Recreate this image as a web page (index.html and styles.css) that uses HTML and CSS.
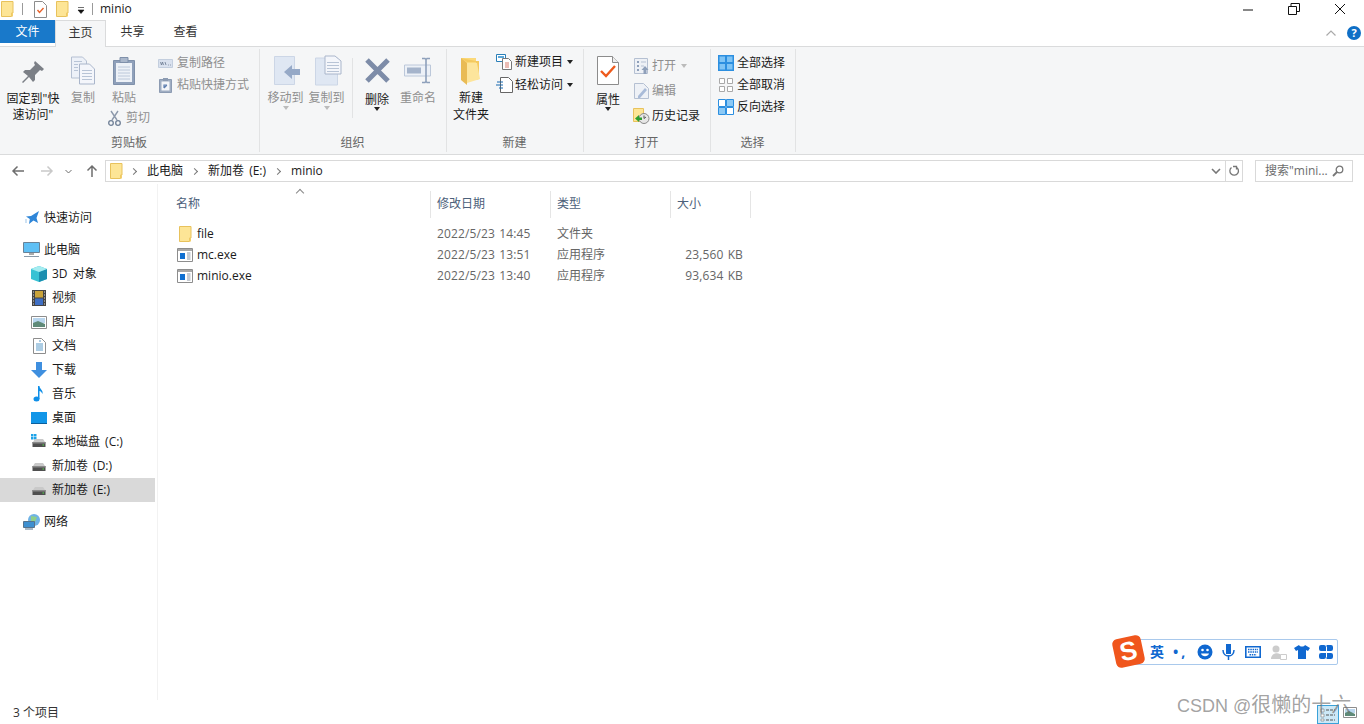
FILE: index.html
```html
<!DOCTYPE html>
<html lang="zh">
<head>
    <meta charset="UTF-8">
    <title>minio</title>
    <link rel="stylesheet" href="styles.css">
</head>
<body>
    <svg class="defs" aria-hidden="true">
        <symbol id="folder" viewBox="0 0 13 16">
            <path d="M.5.500h11.500v11.500h-1.500v3.500H.5z" fill="#fde596" stroke="#e8c25c"/>
            <path d="M10.500 12h1.500v3.500h-1.500z" fill="#f3cf6d"/>
        </symbol>
        <symbol id="exe" viewBox="0 0 16 14">
            <path d="M.5.500h15v13H.5z" fill="#fff" stroke="#8d8d8d"/>
            <path d="M1 1h14v2H1z" fill="#a8a8a8"/>
            <path d="M3 5h5v6H3z" fill="#0f6fd1"/>
            <path d="M10 5h3.500M10 7h3.500M10 9h3.500M10 11h3.500" stroke="#8d99a8"/>
        </symbol>
        <symbol id="drive" viewBox="0 0 16 16">
            <path d="M2 8l2-3h8l2 3z" fill="#c9c9c9"/>
            <path d="M1.500 8h13v5h-13z" fill="#4f4f4f"/>
            <path d="M1.500 8h13v1.500h-13z" fill="#8a8a8a"/>
            <path d="M11.500 10.500h1.500v1h-1.500z" fill="#53e04a"/>
        </symbol>
    </svg>

    <div class="titlebar">
        <svg class="qa-icon" width="13" height="16"><use href="#folder"/></svg>
        <span class="qa-sep"></span>
        <svg class="qa-doc" width="13" height="17" viewBox="0 0 13 17">
            <path d="M.5.500h8l4 4v12H.5z" fill="#fff" stroke="#8c8c8c"/>
            <path d="M3.500 9l2 2.500 4-4.500" fill="none" stroke="#e8622a" stroke-width="1.400"/>
        </svg>
        <svg class="qa-folder" width="13" height="16"><use href="#folder"/></svg>
        <svg class="qa-arrow" width="8" height="7" viewBox="0 0 8 7">
            <path d="M1 .5h6M1 3h6L4 6.500z" fill="#111" stroke="#111" stroke-width=".6"/>
        </svg>
        <span class="qa-sep"></span>
        <span class="title-text">minio</span>
        <div class="win-btns">
            <svg width="12" height="12" viewBox="0 0 12 12"><path d="M1 7h10" stroke="#111"/></svg>
            <svg width="12" height="12" viewBox="0 0 12 12"><path d="M.5 3.500h8v8h-8zM3 3.500V.5h8.500v8H8.500" fill="none" stroke="#111"/></svg>
            <svg width="12" height="12" viewBox="0 0 12 12"><path d="M1 1l10 10M11 1L1 11" stroke="#111"/></svg>
        </div>
    </div>

    <div class="tabs">
        <div class="tab tab-file">文件</div>
        <div class="tab tab-active">主页</div>
        <div class="tab">共享</div>
        <div class="tab">查看</div>
        <div class="tabs-right">
            <svg width="12" height="8" viewBox="0 0 12 8"><path d="M1.500 6.500L6 2l4.500 4.500" fill="none" stroke="#aaa" stroke-width="1.200"/></svg>
            <span class="help">?</span>
        </div>
    </div>

    <div class="ribbon">
        <div class="group group-clip">
            <div class="group-body">
                <div class="big big-pin">
                    <svg class="big-icon" width="24" height="24" viewBox="0 0 24 24">
                        <path d="M14 1l9 8-2 2-2-1-5 5 0 5-2 2-4-5-6 6-1-1 6-6-5-4 2-2 5 0 5-5-1-2z" fill="#7b7f86"/>
                    </svg>
                    <span>固定到"快<br>速访问"</span>
                </div>
                <div class="big big-copy off">
                    <svg class="big-icon" width="24" height="28" viewBox="0 0 24 28">
                        <path d="M.5.500h11l4 4v17H.5z" fill="#edf1f8" stroke="#b5c0d2"/>
                        <path d="M8.500 7.500h10l5 5v15h-15z" fill="#f4f6fb" stroke="#aab6cb"/>
                        <path d="M3 5h8M3 8h4M3 11h4M3 14h4M11 14h10M11 17h10M11 20h10M11 23h10" stroke="#b8c4d6"/>
                    </svg>
                    <span>复制</span>
                </div>
                <div class="clip-mid">
                    <div class="big big-paste off">
                        <svg class="big-icon" width="22" height="29" viewBox="0 0 22 29">
                            <path d="M.5 4.500h21v24H.5z" fill="#8fa0ba" stroke="#7f90aa"/>
                            <path d="M3 7h16v19H3z" fill="#edf1f7"/>
                            <path d="M7 1.500h8v5H7z" fill="#aab7cb" stroke="#7f90aa"/>
                            <path d="M5 11h12M5 14h12M5 17h12M5 20h12M5 23h12" stroke="#bcc8da"/>
                        </svg>
                        <span>粘贴</span>
                    </div>
                    <div class="small off">
                        <svg width="13" height="16" viewBox="0 0 13 16">
                            <path d="M3 1l6 9M10 1L4 10" stroke="#8d99ab" stroke-width="1.400"/>
                            <circle cx="3" cy="13" r="2.300" fill="none" stroke="#6f7f96" stroke-width="1.300"/>
                            <circle cx="10" cy="13" r="2.300" fill="none" stroke="#6f7f96" stroke-width="1.300"/>
                        </svg>
                        <span>剪切</span>
                    </div>
                </div>
                <div class="small-col off">
                    <div class="small">
                        <svg width="15" height="9" viewBox="0 0 15 9">
                            <path d="M.5.500h14v8H.5z" fill="#d9e1ee" stroke="#c3cede"/>
                            <path d="M2.500 3l1 3 1-3 1 3M7 3l1 3M10 6h.8M12 6h.8" stroke="#68778e" fill="none" stroke-width=".8"/>
                        </svg>
                        <span>复制路径</span>
                    </div>
                    <div class="small small-short">
                        <svg width="13" height="16" viewBox="0 0 13 16">
                            <path d="M.5 2.500h12v13H.5z" fill="#9fadc2" stroke="#8c9bb2"/>
                            <path d="M2.500 4.500h8v9h-8z" fill="#f3f5f9"/>
                            <path d="M4 1h5v3H4z" fill="#8c9bb2"/>
                            <path d="M5 11V8h3M8 8l-3 3" fill="none" stroke="#5f7fb0" stroke-width="1.200"/>
                        </svg>
                        <span>粘贴快捷方式</span>
                    </div>
                </div>
            </div>
            <div class="group-label">剪贴板</div>
        </div>

        <div class="group group-org">
            <div class="group-body">
                <div class="big big-move off">
                    <svg class="big-icon" width="27" height="29" viewBox="0 0 27 29">
                        <path d="M.5.500h20v28H.5z" fill="#dfe7f3" stroke="#ccd6e6"/>
                        <path d="M10 16l8-7v4h8v6h-8v4z" fill="#96a9c7"/>
                    </svg>
                    <span>移动到</span>
                    <i class="caret caret-off"></i>
                </div>
                <div class="big big-moveto off">
                    <svg class="big-icon" width="27" height="30" viewBox="0 0 27 30">
                        <path d="M.5 2.500h22v27H.5z" fill="#dfe7f3" stroke="#ccd6e6"/>
                        <path d="M10 .5h10l6 5v13H10z" fill="#f4f6fb" stroke="#aab6cb"/>
                        <path d="M12 7h12M12 10h12M12 13h12M12 16h12" stroke="#b8c4d6"/>
                    </svg>
                    <span>复制到</span>
                    <i class="caret caret-off"></i>
                </div>
                <span class="org-sep"></span>
                <div class="big big-del">
                    <svg class="big-icon" width="27" height="27" viewBox="0 0 27 27">
                        <path d="M3 3l21 21M24 3L3 24" stroke="#7d8ca8" stroke-width="5"/>
                    </svg>
                    <span class="big-low">删除</span>
                    <i class="caret"></i>
                </div>
                <div class="big big-ren off">
                    <svg class="big-icon" width="28" height="26" viewBox="0 0 28 26">
                        <path d="M.5 7.500h26v11H.5z" fill="#edf1f7" stroke="#bcc8da"/>
                        <path d="M3 10h14v6H3z" fill="#a5b4cb"/>
                        <path d="M18 1h3l1 1 1-1h3M22 2v22M18 25h3l1-1 1 1h3" fill="none" stroke="#8ea0bb" stroke-width="1.600"/>
                    </svg>
                    <span>重命名</span>
                </div>
            </div>
            <div class="group-label">组织</div>
        </div>

        <div class="group group-new">
            <div class="group-body">
                <div class="big big-folder">
                    <svg class="big-icon" width="20" height="27" viewBox="0 0 20 27">
                        <path d="M0 0h15v20H0z" fill="#fbd97a"/>
                        <path d="M0 0l6 4h9v18l3-1V3H15z" fill="#f4c95f"/>
                        <path d="M0 0l6 5v22l-6-5z" fill="#e9bb55"/>
                        <path d="M6 5h10l3 16-13 4z" fill="#fde59c"/>
                    </svg>
                    <span>新建<br>文件夹</span>
                </div>
                <div class="small-col new-col">
                    <div class="small">
                        <svg width="17" height="16" viewBox="0 0 17 16">
                            <path d="M.5.500h9v7h-9z" fill="#fff" stroke="#2a7fb8"/>
                            <path d="M2 2h6v2H2z" fill="#5aa6d8"/>
                            <path d="M6.500 4.500h6l3 3v8h-9z" fill="#fff" stroke="#777"/>
                            <path d="M9 9h4M9 11h4M9 13h4" stroke="#d97a6b"/>
                        </svg>
                        <span>新建项目</span>
                        <i class="caret caret-side"></i>
                    </div>
                    <div class="small">
                        <svg width="17" height="16" viewBox="0 0 17 16">
                            <path d="M4.500.5h8l4 4v11h-12z" fill="#fff" stroke="#666"/>
                            <path d="M1 5h6M0 8h7M3 11h4" stroke="#1668b0"/>
                        </svg>
                        <span>轻松访问</span>
                        <i class="caret caret-side"></i>
                    </div>
                </div>
            </div>
            <div class="group-label">新建</div>
        </div>

        <div class="group group-open">
            <div class="group-body">
                <div class="big big-prop">
                    <svg class="big-icon" width="22" height="29" viewBox="0 0 22 29">
                        <path d="M.5.500h15l6 6v22H.5z" fill="#fff" stroke="#8c8c8c"/>
                        <path d="M15.500.5v6h6" fill="#eee" stroke="#8c8c8c"/>
                        <path d="M4 15l5 5 9-10" fill="none" stroke="#ee5a1c" stroke-width="2.400"/>
                    </svg>
                    <span class="big-low">属性</span>
                    <i class="caret"></i>
                </div>
                <div class="small-col open-col">
                    <div class="small off">
                        <svg width="15" height="16" viewBox="0 0 15 16">
                            <path d="M.5.500h13v15H.5z" fill="#eef1f6" stroke="#b5c0d2"/>
                            <path d="M3 3h2v2H3zM3 7h2v2H3zM3 11h2v2H3z" fill="#8fa0ba"/>
                            <path d="M7 4h5M7 8h3" stroke="#b5c0d2"/>
                            <path d="M11 8l3.500 4H12.500v4h-3v-4H7.500z" fill="#8fa0ba"/>
                        </svg>
                        <span>打开</span>
                        <i class="caret caret-side caret-off"></i>
                    </div>
                    <div class="small off">
                        <svg width="15" height="16" viewBox="0 0 15 16">
                            <path d="M.5.500h9l5 5v10H.5z" fill="#eef1f6" stroke="#b5c0d2"/>
                            <path d="M4 13l7-8 2 2-7 8H4z" fill="#a9bbd8"/>
                        </svg>
                        <span>编辑</span>
                    </div>
                    <div class="small">
                        <svg width="17" height="16" viewBox="0 0 17 16">
                            <path d="M.5.500h10v13H.5z" fill="#fde596" stroke="#e8c25c"/>
                            <circle cx="11" cy="10.500" r="5" fill="#e6e6e6" stroke="#888"/>
                            <path d="M11 7.500v3l2-1.500" fill="none" stroke="#555"/>
                            <path d="M2 10.500l4-3.500v2.500h3v2.500H6v2z" fill="#2f9e2f"/>
                        </svg>
                        <span>历史记录</span>
                    </div>
                </div>
            </div>
            <div class="group-label">打开</div>
        </div>

        <div class="group group-sel">
            <div class="group-body">
                <div class="small-col sel-col">
                    <div class="small">
                        <svg width="16" height="16" viewBox="0 0 16 16">
                            <path d="M0 0h16v16H0z" fill="#2c8fe0"/>
                            <path d="M1.500 1.500h5.500v5.500H1.500zM9 1.500h5.500v5.500H9zM1.500 9h5.500v5.500H1.500zM9 9h5.500v5.500H9z" fill="#7fc4f5"/>
                        </svg>
                        <span>全部选择</span>
                    </div>
                    <div class="small">
                        <svg width="16" height="16" viewBox="0 0 16 16">
                            <path d="M1.500 1.500h5v5h-5zM9.500 1.500h5v5h-5zM1.500 9.500h5v5h-5zM9.500 9.500h5v5h-5z" fill="#fff" stroke="#a9a9a9"/>
                        </svg>
                        <span>全部取消</span>
                    </div>
                    <div class="small">
                        <svg width="16" height="16" viewBox="0 0 16 16">
                            <path d="M.5 8.500h7v7h-7zM8.500.5h7v7h-7z" fill="#8cc9f5" stroke="#2c8fe0"/>
                            <path d="M.5.500h7v7h-7zM8.500 8.500h7v7h-7z" fill="#fff" stroke="#2c8fe0"/>
                        </svg>
                        <span>反向选择</span>
                    </div>
                </div>
            </div>
            <div class="group-label">选择</div>
        </div>
    </div>

    <div class="addressbar">
        <div class="nav-btns">
            <svg width="14" height="12" viewBox="0 0 14 12"><path d="M13 6H2M6.500 1.500L2 6l4.500 4.500" fill="none" stroke="#6e6e6e" stroke-width="1.500"/></svg>
            <svg width="14" height="12" viewBox="0 0 14 12"><path d="M1 6h11M7.500 1.500L12 6l-4.500 4.500" fill="none" stroke="#c9c9c9" stroke-width="1.500"/></svg>
            <svg width="7" height="5" viewBox="0 0 7 5"><path d="M.5 1l3 3 3-3" fill="none" stroke="#6e6e6e"/></svg>
            <svg width="12" height="14" viewBox="0 0 12 14"><path d="M6 13V2M1.500 6.500L6 2l4.500 4.500" fill="none" stroke="#6e6e6e" stroke-width="1.500"/></svg>
        </div>
        <div class="path-box">
            <svg class="path-folder" width="13" height="16"><use href="#folder"/></svg>
            <i class="crumb-sep"></i><span>此电脑</span>
            <i class="crumb-sep"></i><span>新加卷 (E:)</span>
            <i class="crumb-sep"></i><span>minio</span>
            <div class="path-end">
                <svg width="10" height="6" viewBox="0 0 10 6"><path d="M1 1l4 4 4-4" fill="none" stroke="#777" stroke-width="1.600"/></svg>
                <span class="path-refresh">
                    <svg width="11" height="12" viewBox="0 0 11 12"><path d="M4 1.500h3.500v3M7 2a4.300 4.300 0 1 1-4.500.5" fill="none" stroke="#777" stroke-width="1.300"/></svg>
                </span>
            </div>
        </div>
        <div class="search-box">
            <span>搜索"mini...</span>
            <svg width="12" height="12" viewBox="0 0 12 12"><circle cx="7.500" cy="4.500" r="3.300" fill="none" stroke="#777" stroke-width="1.300"/><path d="M5 7l-4 4" stroke="#777" stroke-width="1.800"/></svg>
        </div>
    </div>

    <div class="main">
        <div class="nav">
            <div class="nav-item top nav-quick">
                <svg width="14" height="14" viewBox="0 0 14 14"><path d="M14 0l-2.500 7 1.500 5-4.500-2.500L4 13l.8-5L1 5.500l5-.5z" fill="#2f86d8"/><path d="M0 9h2M0 11h2" stroke="#9cc4e8"/></svg>
                <span>快速访问</span>
            </div>
            <div class="nav-block">
                <div class="nav-item top">
                    <svg width="18" height="16" viewBox="0 0 18 16"><path d="M.5.500h16v10H.5z" fill="#5fc0f5" stroke="#6a8296"/><path d="M6 11h5v2H6z" fill="#aaa"/><path d="M1 14h15v1H1z" fill="#8a9aa8"/></svg>
                    <span>此电脑</span>
                </div>
                <div class="nav-item">
                    <svg width="16" height="16" viewBox="0 0 16 16"><path d="M8 0l8 3v10l-8 3-8-3V3z" fill="#37c2d4"/><path d="M8 6l8-3v10l-8 3z" fill="#1b8fb0"/><path d="M8 0l8 3-8 3-8-3z" fill="#a5ecf0"/></svg>
                    <span>3D 对象</span>
                </div>
                <div class="nav-item">
                    <svg width="16" height="16" viewBox="0 0 16 16"><path d="M1 0h14v16H1z" fill="#444"/><path d="M4 1h8v6.500H4z" fill="#c9a33a"/><path d="M4 8.500h8V15H4z" fill="#3f6fc4"/><path d="M2 2h1M2 5h1M2 8h1M2 11h1M2 14h1M13 2h1M13 5h1M13 8h1M13 11h1M13 14h1" stroke="#ddd"/></svg>
                    <span>视频</span>
                </div>
                <div class="nav-item">
                    <svg width="16" height="13" viewBox="0 0 16 13"><path d="M.5.500h15v12H.5z" fill="#fff" stroke="#8d8d8d"/><path d="M2 2h12v5H2z" fill="#b9d6ee"/><path d="M2 7l5-2 7 3v3H2z" fill="#5f8a78"/></svg>
                    <span>图片</span>
                </div>
                <div class="nav-item">
                    <svg class="nav-doc" width="13" height="16" viewBox="0 0 13 16"><path d="M.5.500h8l4 4v11H.5z" fill="#fff" stroke="#8d8d8d"/><path d="M3 6h7M3 8h7M3 10h7M3 12h7M6 3h2" stroke="#5a9bc9"/></svg>
                    <span>文档</span>
                </div>
                <div class="nav-item">
                    <svg width="16" height="16" viewBox="0 0 16 16"><path d="M5 0h6v8h5l-8 8-8-8h5z" fill="#3f8fdf"/></svg>
                    <span>下载</span>
                </div>
                <div class="nav-item">
                    <svg width="16" height="16" viewBox="0 0 16 16"><ellipse cx="5.500" cy="13" rx="3" ry="2.500" fill="#0f8fe8"/><path d="M7 13V0h1.500c0 3 4 4 3 8-1-2-2-3-3-3v8z" fill="#0f8fe8"/></svg>
                    <span>音乐</span>
                </div>
                <div class="nav-item">
                    <svg width="16" height="12" viewBox="0 0 16 12"><path d="M0 0h16v11H0z" fill="#1296e8"/><path d="M0 11h16v1H0z" fill="#0c5f9c"/></svg>
                    <span>桌面</span>
                </div>
                <div class="nav-item">
                    <svg width="16" height="16" viewBox="0 0 16 16"><path d="M0 0h2.500v2.500H0zM3 0h2.500v2.500H3zM0 3h2.500v2.500H0zM3 3h2.500v2.500H3z" fill="#1fa3e8"/><use href="#drive"/></svg>
                    <span>本地磁盘 (C:)</span>
                </div>
                <div class="nav-item">
                    <svg width="16" height="16"><use href="#drive"/></svg>
                    <span>新加卷 (D:)</span>
                </div>
                <div class="nav-item nav-selected">
                    <svg width="16" height="16"><use href="#drive"/></svg>
                    <span>新加卷 (E:)</span>
                </div>
            </div>
            <div class="nav-block">
                <div class="nav-item top">
                    <svg width="18" height="16" viewBox="0 0 18 16"><circle cx="11" cy="6" r="6" fill="#6fb3e6"/><path d="M8 2l6 1-2 5-4-1z" fill="#8fcf8a"/><path d="M.5 7.500h11v6H.5z" fill="#3d8fd0" stroke="#55728c"/><path d="M2 15h8" stroke="#55728c"/></svg>
                    <span>网络</span>
                </div>
            </div>
        </div>

        <div class="files">
            <span class="sort-arrow"></span>
            <div class="head">
                <div class="col-name">名称</div>
                <div class="col-date">修改日期</div>
                <div class="col-type">类型</div>
                <div class="col-size">大小</div>
            </div>
            <div class="row">
                <div class="col-name"><svg class="row-folder" width="13" height="16"><use href="#folder"/></svg>file</div>
                <div class="col-date">2022/5/23 14:45</div>
                <div class="col-type">文件夹</div>
                <div class="col-size"></div>
            </div>
            <div class="row">
                <div class="col-name"><svg width="16" height="14"><use href="#exe"/></svg>mc.exe</div>
                <div class="col-date">2022/5/23 13:51</div>
                <div class="col-type">应用程序</div>
                <div class="col-size">23,560 KB</div>
            </div>
            <div class="row">
                <div class="col-name"><svg width="16" height="14"><use href="#exe"/></svg>minio.exe</div>
                <div class="col-date">2022/5/23 13:40</div>
                <div class="col-type">应用程序</div>
                <div class="col-size">93,634 KB</div>
            </div>
        </div>
    </div>

    <div class="statusbar">
        <span>3 个项目</span>
        <div class="view-btns">
            <span class="view-btn">
                <svg width="16" height="14" viewBox="0 0 16 14"><path d="M1 1h3v3H1zM1 6h3v3H1zM1 11h3v2H1z" fill="#fff" stroke="#777" stroke-width=".6"/><path d="M6 2h9M6 7h9M6 12h9" stroke="#555" stroke-dasharray="3 1"/></svg>
            </span>
            <svg class="view-thumb" width="14" height="11" viewBox="0 0 14 11"><path d="M.5.500h13v10H.5z" fill="#fff" stroke="#8d8d8d"/><path d="M2 2h10v4H2z" fill="#b9d6ee"/><path d="M2 6l4-2 6 3v2H2z" fill="#5f8a78"/></svg>
        </div>
    </div>

    <div class="ime">
        <span class="ime-logo">S</span>
        <span class="ime-lang">英</span>
        <span class="ime-punc">•,</span>
        <svg width="16" height="16" viewBox="0 0 16 16"><circle cx="8" cy="8" r="7.500" fill="#1068d0"/><circle cx="5.500" cy="6" r="1.300" fill="#fff"/><circle cx="10.500" cy="6" r="1.300" fill="#fff"/><path d="M4 9.500c1 3.500 7 3.500 8 0z" fill="#fff"/></svg>
        <svg class="ime-mic" width="13" height="16" viewBox="0 0 13 16"><path d="M4 0h5v10H4z" fill="#1068d0"/><path d="M1 6c0 8 11 8 11 0M6.500 11v5" fill="none" stroke="#1068d0" stroke-width="1.500"/></svg>
        <svg class="ime-kbd" width="16" height="12" viewBox="0 0 16 12"><path d="M.8.800h14.400v10.400H.8z" fill="#fff" stroke="#1068d0" stroke-width="1.600"/><path d="M3 3.500h10M3 6h10M4.500 8.800h7" stroke="#1068d0" stroke-width="1.400" stroke-dasharray="1.500 .8"/></svg>
        <svg class="ime-user" width="16" height="15" viewBox="0 0 16 15"><circle cx="5" cy="4" r="3.500" fill="#ccc"/><path d="M0 14c0-7 10-7 10-3v3z" fill="#ccc"/><path d="M9.500 9.500h6v5h-6z" fill="#fff" stroke="#ccc"/></svg>
        <svg width="16" height="14" viewBox="0 0 16 14"><path d="M5 0c1 2 5 2 6 0l5 3-2 3-2-1v9H4V5L2 6 0 3z" fill="#1068d0"/></svg>
        <svg width="14" height="14" viewBox="0 0 14 14"><path d="M2 0h3a2 2 0 0 1 2 2v4H2a2 2 0 0 1-2-2V2a2 2 0 0 1 2-2zM9 0h3a2 2 0 0 1 2 2v2a2 2 0 0 1-2 2H8V2a1 1 0 0 1 1-2zM2 8h5v4a2 2 0 0 1-2 2H2a2 2 0 0 1-2-2v-2a2 2 0 0 1 2-2zM8 8h4a2 2 0 0 1 2 2v2a2 2 0 0 1-2 2H9a1 1 0 0 1-1-2z" fill="#1068d0"/></svg>
    </div>

    <div class="watermark">CSDN @<span>很懒的十六</span></div>
</body>
</html>
```

FILE: styles.css
```css
*{
    margin: 0;
    padding: 0;
    box-sizing: border-box;
}
html, body{
    width: 1364px;
    height: 724px;
    overflow: hidden;
}
body{
    display: flex;
    flex-direction: column;
    background: #fff;
    color: #1a1a1a;
    font: 12px/16px "Open Sans", "Noto Sans CJK SC", sans-serif;
}
svg{
    flex: none;
    display: block;
}
.defs{
    position: absolute;
    width: 0;
    height: 0;
}

/* title bar */
.titlebar{
    display: flex;
    align-items: center;
    height: 18px;
    flex: none;
    padding-left: 1px;
}
.qa-sep{
    width: 1px;
    height: 12px;
    background: #9a9a9a;
}
.qa-icon{ margin-right: 8px; }
.qa-doc{ margin-left: 11px; }
.qa-folder{ margin-left: 9px; }
.qa-arrow{ margin: 2px 7px 0 8px; }
.title-text{ margin-left: 7px; }
.win-btns{
    display: flex;
    gap: 34px;
    margin-left: auto;
    padding-right: 18px;
}

/* tabs */
.tabs{
    display: flex;
    align-items: flex-end;
    height: 29px;
    flex: none;
    border-bottom: 1px solid #dadbdc;
}
.tab{
    width: 53px;
    height: 26px;
    line-height: 24px;
    text-align: center;
    color: #333;
}
.tab-file{
    width: 55px;
    height: 23px;
    margin-bottom: 3px;
    line-height: 23px;
    background: #1979ca;
    color: #fff;
}
.tab-active{
    width: 51px;
    height: 27px;
    margin-bottom: -1px;
    background: #f5f6f7;
    border: 1px solid #dadbdc;
    border-bottom: 0;
}
.tabs-right{
    display: flex;
    align-items: center;
    gap: 10px;
    margin-left: auto;
    padding: 0 3px 6px 0;
}
.help{
    width: 14px;
    height: 14px;
    border-radius: 50%;
    background: #0f6fc6;
    color: #fff;
    font-weight: 700;
    font-size: 11px;
    line-height: 14px;
    text-align: center;
}

/* ribbon */
.ribbon{
    display: flex;
    height: 108px;
    flex: none;
    background: #f5f6f7;
    border-bottom: 1px solid #dadbdc;
}
.group{
    display: flex;
    flex-direction: column;
    height: 103px;
    margin-top: 2px;
    border-right: 1px solid #e2e3e4;
}
.group-clip{ width: 260px; }
.group-org{ width: 187px; }
.group-new{ width: 137px; }
.group-open{ width: 127px; }
.group-sel{ width: 85px; }
.group-body{
    display: flex;
    align-items: flex-start;
    height: 86px;
    padding-top: 1px;
}
.group-label{
    padding-right: 1px;
    text-align: center;
    color: #666;
    line-height: 16px;
}
.off{ color: #8f8f8f; }
.big{
    display: flex;
    flex-direction: column;
    align-items: center;
    padding-top: 4px;
    text-align: center;
    flex: none;
}
.big-icon{
    height: 33px;
    margin-bottom: 3px;
}
.big-low{ margin-top: 2px; }
.big-pin{ width: 64px; margin-left: 1px; }
.big-pin .big-icon{ padding-top: 3px; margin-bottom: 4px; }
.big-copy{ width: 38px; margin-left: -1px; }
.clip-mid{
    display: flex;
    flex-direction: column;
    align-items: center;
    width: 46px;
    margin-left: 4px;
}
.big-paste{ margin-right: 10px; }
.clip-mid .small{
    height: 20px;
    margin-top: 2px;
    gap: 5px;
}
.small-col{
    display: flex;
    flex-direction: column;
    margin-left: 6px;
    padding-top: 2px;
}
.small{
    display: flex;
    align-items: center;
    gap: 4px;
    height: 22px;
    white-space: nowrap;
}
.small-short svg{ margin: 0 1px 0 1px; }
.big-move{ width: 41px; margin-left: 5px; }
.big-move .big-icon, .big-moveto .big-icon{ margin-left: 4px; }
.big-moveto{ width: 41px; }
.org-sep{
    width: 1px;
    height: 60px;
    margin: 8px 4px 0 5px;
    background: #e2e3e4;
}
.big-del{ width: 40px; }
.big-ren{ width: 42px; margin-left: 0; }
.big-folder{ width: 48px; }
.big-folder .big-icon{ padding-top: 2px; margin-bottom: 2px; }
.big-folder span{ line-height: 17px; }
.new-col{ margin-left: 1px; padding-top: 0; }
.new-col .small{ height: 23px; gap: 2px; }
.big-prop{ width: 48px; }
.open-col{ margin-left: 1px; padding-top: 3px; }
.open-col .small{ height: 25px; gap: 3px; }
.open-col .small svg{ margin-left: 1px; }
.open-col .small:last-child{ gap: 2px; }
.open-col .small:last-child svg{ margin-left: 0; }
.sel-col{ margin-left: 7px; padding-top: 2px; }
.sel-col .small{ gap: 3px; }
.caret{
    display: block;
    width: 0;
    height: 0;
    border: 3px solid transparent;
    border-bottom: 0;
    border-top: 4px solid #222;
}
.big-low + .caret{ margin-top: -1px; }
.caret-off{ border-top-color: #bbb; }
.caret.caret-side{ margin: 0 0 0 2px; }

/* address bar */
.addressbar{
    display: flex;
    align-items: center;
    height: 29px;
    flex: none;
    padding: 5px 11px 2px 0;
}
.nav-btns{
    display: flex;
    align-items: center;
    width: 105px;
    padding-left: 11px;
    gap: 15px;
}
.nav-btns svg:nth-child(3){ margin: 0 -1px 0 -4px; }
.path-box{
    display: flex;
    align-items: center;
    width: 1138px;
    height: 22px;
    padding-left: 4px;
    border: 1px solid #d9d9d9;
    word-spacing: 2px;
}
.path-box span{ white-space: nowrap; }
.crumb-sep{
    width: 5px;
    height: 5px;
    margin: 0 11px 0 9px;
    border-top: 1px solid #777;
    border-right: 1px solid #777;
    transform: rotate(45deg);
}
.path-folder{ margin-right: -1px; }
.path-end{
    display: flex;
    align-items: center;
    gap: 4px;
    height: 100%;
    margin-left: auto;
}
.path-refresh{
    display: flex;
    align-items: center;
    justify-content: center;
    width: 17px;
    height: 100%;
    border-left: 1px solid #d9d9d9;
}
.search-box{
    display: flex;
    align-items: center;
    justify-content: space-between;
    width: 98px;
    height: 22px;
    margin-left: 12px;
    padding: 0 8px 0 9px;
    border: 1px solid #d9d9d9;
    color: #6d6d6d;
}

/* nav + file list */
.main{
    display: flex;
    flex: 1;
    min-height: 0;
}
.nav{
    width: 158px;
    flex: none;
    padding-top: 22px;
    border-right: 1px solid #f2f2f2;
}
.nav-block{ margin-top: 8px; }
.nav-item{
    display: flex;
    align-items: center;
    width: 155px;
    height: 24px;
    padding-left: 31px;
    word-spacing: 2px;
}
.nav-item svg{ margin-right: 5px; }
.nav-item svg.nav-doc{ margin: 0 6px 0 2px; }
.nav-item.top{ padding-left: 23px; }
.nav-item.top svg{ margin-right: 3px; }
.nav-item.nav-quick svg{ margin: 0 5px 0 2px; }
.nav-selected{ background: #d9d9d9; }
.files{
    position: relative;
    flex: 1;
    padding: 7px 0 0 12px;
}
.sort-arrow{
    position: absolute;
    top: 6px;
    left: 139px;
    width: 6px;
    height: 6px;
    border-top: 1px solid #888;
    border-left: 1px solid #888;
    transform: rotate(45deg);
}
.head, .row{ display: flex; }
.head{
    height: 27px;
    margin-bottom: 5px;
    line-height: 26px;
    color: #4c607a;
}
.head div{
    padding-left: 6px;
    border-right: 1px solid #e5e5e5;
}
.row{
    height: 21px;
    line-height: 21px;
    color: #666;
    word-spacing: 1px;
}
.row > div{ padding-left: 6px; }
.col-name{ width: 261px; }
.col-date{ width: 120px; }
.col-type{ width: 120px; }
.col-size{ width: 80px; }
.row .col-date, .row .col-size{ letter-spacing: .13px; }
.row .col-name{
    display: flex;
    align-items: center;
    gap: 4px;
    color: #1a1a1a;
}
.row .col-name svg{ margin-left: 1px; }
.row .col-name svg.row-folder{ margin: 0 1px 0 3px; }
.row .col-size{
    padding: 0 8px 0 0;
    text-align: right;
}

/* status bar */
.statusbar{
    display: flex;
    align-items: center;
    justify-content: space-between;
    height: 24px;
    flex: none;
    padding: 2px 7px 0 13px;
    color: #333;
}
.view-btns{
    display: flex;
    align-items: center;
    gap: 4px;
    align-self: flex-start;
    margin-top: 3px;
}
.view-btn{
    display: flex;
    align-items: center;
    justify-content: center;
    width: 22px;
    height: 19px;
    background: #cce8f7;
    border: 1px solid #3ba2d8;
}
.view-thumb{ margin-bottom: 4px; }

/* IME toolbar, floats over the window */
.ime{
    position: absolute;
    left: 1130px;
    top: 639px;
    display: flex;
    align-items: center;
    width: 208px;
    height: 26px;
    padding-left: 19px;
    gap: 9px;
    background: #fff;
    border: 1px solid #a9c9ec;
    border-radius: 2px;
}
.ime-logo{
    position: absolute;
    left: -17px;
    top: -3px;
    width: 29px;
    height: 29px;
    border-radius: 5px;
    background: #f0561d;
    color: #fff;
    font: 700 26px/29px "Liberation Sans", sans-serif;
    text-align: center;
    transform: rotate(-12deg);
}
.ime-lang{
    color: #1068d0;
    font-weight: 700;
    font-size: 14px;
}
.ime-punc{
    width: 15px;
    color: #1068d0;
    font-weight: 700;
    font-size: 14px;
    letter-spacing: 3px;
}
.ime-mic{ margin-right: 1px; }
.ime-kbd{ margin-right: 1px; }
.ime-user{ margin-right: -2px; }
.watermark{
    position: absolute;
    left: 1177px;
    top: 692px;
    font: 18px/26px "Liberation Sans", "Noto Sans CJK SC", sans-serif;
    color: rgba(110, 110, 110, .65);
    white-space: nowrap;
}
.watermark span{ font-size: 20px; }
```
